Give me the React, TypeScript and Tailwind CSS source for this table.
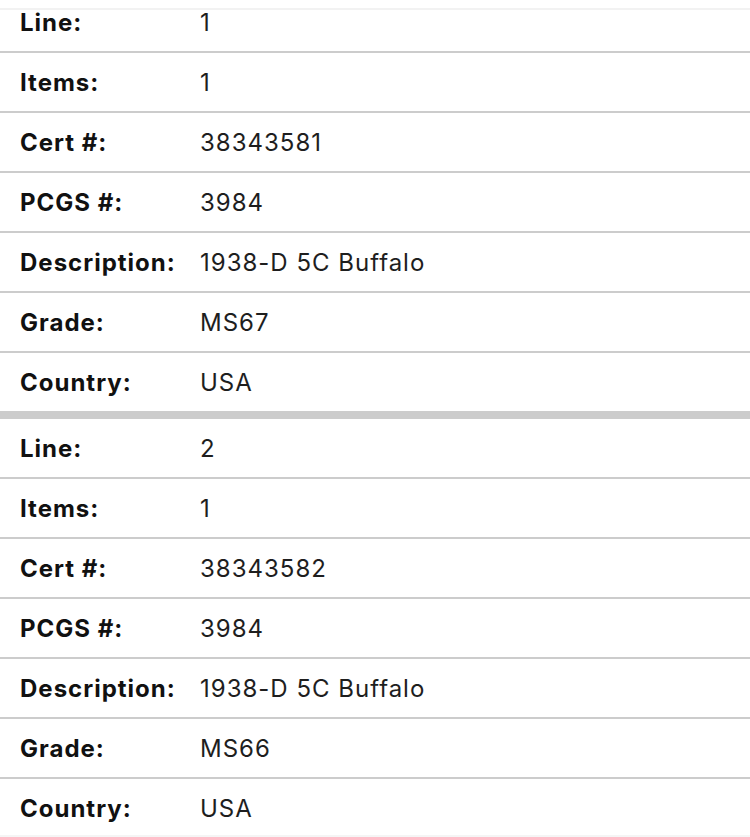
const lines = [
  { line: '1', items: '1', cert: '38343581', pcgs: '3984', description: '1938-D 5C Buffalo', grade: 'MS67', country: 'USA' },
  { line: '2', items: '1', cert: '38343582', pcgs: '3984', description: '1938-D 5C Buffalo', grade: 'MS66', country: 'USA' },
];

function Row({ label, value }: { label: string; value: string }) {
  return (
    <div className="flex h-[60px] items-center border-b-2 border-[#cccccc] pt-[2px]">
      <div className="w-[200px] shrink-0 pl-[20px] font-bold tracking-[1px] text-[#111111]">{label}</div>
      <div className="tracking-[1px] text-[#1e1e1e]">{value}</div>
    </div>
  );
}

export default function App() {
  return (
    <div
      className="relative h-[837px] overflow-hidden bg-white text-[24px]"
      style={{ fontFamily: 'Inter, "Noto Sans", sans-serif' }}
    >
      <div className="-mt-[7px]">
        {lines.map((l, idx) => (
          <div key={idx} className={idx < lines.length - 1 ? 'border-b-[6px] border-[#cccccc]' : ''}>
            <Row label="Line:" value={l.line} />
            <Row label="Items:" value={l.items} />
            <Row label="Cert #:" value={l.cert} />
            <Row label="PCGS #:" value={l.pcgs} />
            <Row label="Description:" value={l.description} />
            <Row label="Grade:" value={l.grade} />
            <Row label="Country:" value={l.country} />
          </div>
        ))}
      </div>
      {/* header shadow over the scrolled table */}
      <div className="absolute left-0 right-0 top-[8px] h-[2px] bg-[#f2f2f2]" />
      <div className="absolute bottom-0 left-0 right-0 h-[2px] bg-[#f5f5f5]" />
    </div>
  );
}
